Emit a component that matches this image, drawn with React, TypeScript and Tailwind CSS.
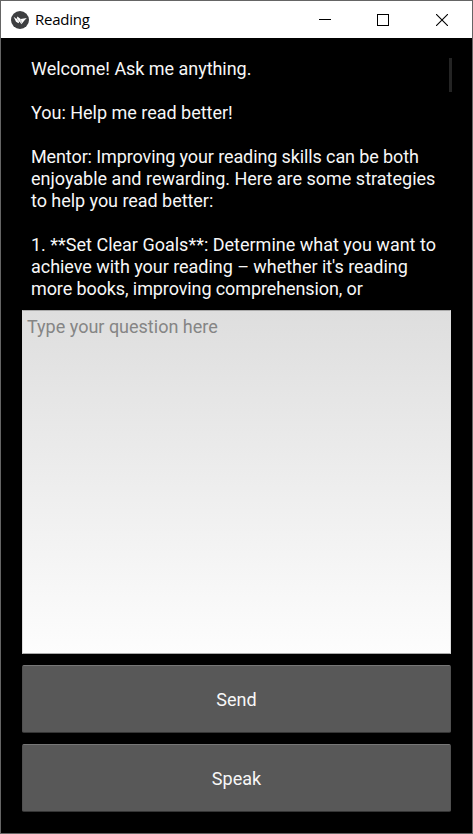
import React from "react";

const lines = [
  { text: "Welcome! Ask me anything.", tracking: "tracking-[-0.04px]" },
  { text: "", tracking: "" },
  { text: "You: Help me read better!", tracking: "tracking-[-0.01px]" },
  { text: "", tracking: "" },
  { text: "Mentor: Improving your reading skills can be both", tracking: "tracking-[-0.11px]" },
  { text: "enjoyable and rewarding. Here are some strategies", tracking: "" },
  { text: "to help you read better:", tracking: "tracking-[-0.04px]" },
  { text: "", tracking: "" },
  { text: "1. **Set Clear Goals**: Determine what you want to", tracking: "" },
  { text: "achieve with your reading – whether it's reading", tracking: "tracking-[-0.04px]" },
  { text: "more books, improving comprehension, or", tracking: "tracking-[-0.1px]" },
];

function TitleBar() {
  return (
    <header className="flex h-[37px] shrink-0 items-center bg-white pl-[10px] text-black">
      <svg width="18" height="18" viewBox="0 0 18 18" className="shrink-0">
        <circle cx="9" cy="9" r="9" fill="#3d3e40" />
        <path d="M2.6 5.8 L5.6 8 L6.4 5.6 L9.7 8 L15.8 7 L13.4 9.5 L10.4 13.2 L8.5 10.6 L7.5 12.3 L5 10.8 Z" fill="#fff" />
        <path d="M5.9 7.3 L7.7 10.6 M9.6 8.4 L10.5 12.4" stroke="#88898b" strokeWidth=".6" />
      </svg>
      <h1 className="-mt-[2px] ml-[6px] grow font-['Open_Sans','Noto_Sans',sans-serif] text-[15px] leading-5 tracking-[-0.25px]">Reading</h1>
      <div className="flex">
        <button aria-label="Minimize" className="flex h-[37px] w-[58px] items-center justify-center">
          <svg width="12" height="12" shapeRendering="crispEdges"><path d="M0 5.5H12" stroke="#000" /></svg>
        </button>
        <button aria-label="Maximize" className="flex h-[37px] w-[58px] items-center justify-center">
          <svg width="12" height="12" shapeRendering="crispEdges"><path d="M.5 .5H11.5V11.5H.5Z" fill="none" stroke="#000" /></svg>
        </button>
        <button aria-label="Close" className="flex h-[37px] w-[60px] items-center justify-center">
          <svg width="12" height="12"><path d="M0 0L12 12M12 0L0 12" stroke="#000" strokeWidth="1.1" /></svg>
        </button>
      </div>
    </header>
  );
}

function ActionButton({ label }: { label: string }) {
  return (
    <button className="flex h-[68px] shrink-0 items-center justify-center rounded-[2px] border border-[#505050] border-t-[#777] border-b-[#353535] bg-[#585858] pt-[2px] text-[18px] leading-[22px] text-[#f7f7f7]">
      {label}
    </button>
  );
}

export default function App() {
  return (
    <div className="flex h-[834px] w-[473px] flex-col border border-[#656565] bg-black font-[Roboto,sans-serif]">
      <TitleBar />
      <main className="flex grow flex-col pt-[20px] pr-[21px] pl-[21px]">
        <section className="flex h-[252px] shrink-0 justify-between pl-[9px]">
          <div className="text-[18px] leading-[22px] text-[#f7f7f7]">
            {lines.map((line, i) => (
              <p key={i} className={`h-[22px] whitespace-nowrap ${line.tracking}`}>{line.text}</p>
            ))}
          </div>
          <div className="mr-[-1px] h-[34px] w-[3px] shrink-0 bg-[#242424]" />
        </section>
        <textarea
          placeholder="Type your question here"
          className="block h-[344px] w-full shrink-0 resize-none border border-[#aaa] border-r-[#ddd] border-l-[#ddd] bg-linear-to-b from-[#dedede] to-[#fdfdfd] px-[4px] py-[5px] text-[18px] leading-[22px] outline-none placeholder:text-[#858585]"
        />
        <div className="mt-[11px] flex flex-col gap-[11px]">
          <ActionButton label="Send" />
          <ActionButton label="Speak" />
        </div>
      </main>
    </div>
  );
}
